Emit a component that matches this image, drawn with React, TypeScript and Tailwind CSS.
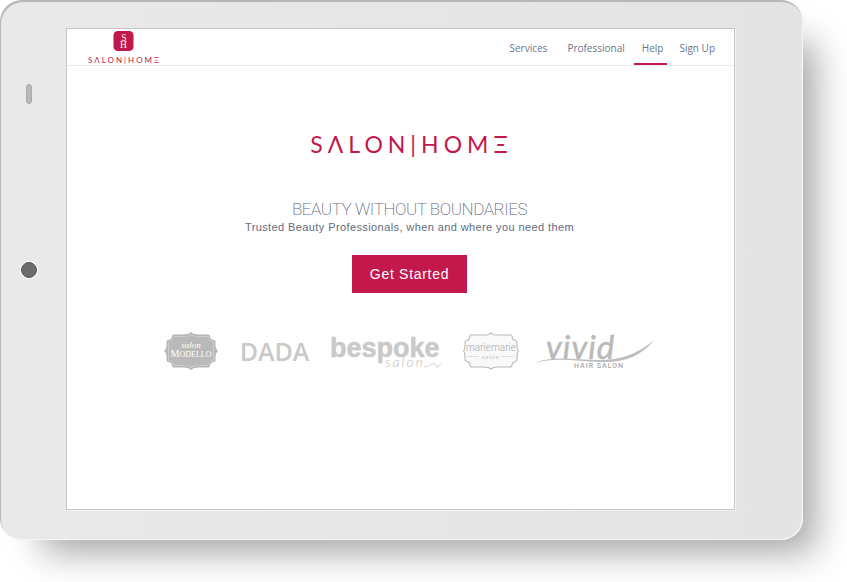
import React from "react";

const navLinks = [
  { label: "Services", className: "mr-1 px-2" },
  { label: "Professional", className: "mr-px px-2" },
  { label: "Help", className: "border-[#c2184b] pl-2 pr-1", current: true },
  { label: "Sign Up", className: "ml-1 px-2" },
];

function Monogram() {
  return (
    <svg viewBox="0 0 21 21" className="h-[21px] w-[21px]" aria-hidden="true">
      <rect width="21" height="21" rx="4.5" fill="#c2184b" />
      <g fill="#fff" fontFamily="'Liberation Serif', serif" textAnchor="middle">
        <text x="11" y="10" fontSize="10">S</text>
        <text x="10.5" y="17.500" fontSize="10">H</text>
      </g>
    </svg>
  );
}

function ModelloLogo() {
  return (
    <svg viewBox="0 0 54 38" className="h-[38px] w-[54px] shrink-0" role="img" aria-label="Salon Modello">
      <path
        d="M9 3H20Q25 3 27 .5Q29 3 34 3H45Q45.500 8 51 9V14Q51 17 53.500 19Q51 21 51 24V29Q45.500 30 45 35H34Q29 35 27 37.500Q25 35 20 35H9Q8.500 30 3 29V24Q3 21 .5 19Q3 17 3 14V9Q8.500 8 9 3Z"
        fill="#b9b9b9" stroke="#b3b3b3" strokeWidth="1"
      />
      <path
        d="M10 4.500H21Q25 4.500 27 2.500Q29 4.500 33 4.500H44Q45 9 49.500 10V28Q45 29 44 33.500H33Q29 33.500 27 35.500Q25 33.500 21 33.500H10Q9 29 4.500 28V10Q9 9 10 4.500Z"
        fill="none" stroke="#d4d4d4" strokeWidth=".7"
      />
      <g fill="#fff" fontFamily="'Liberation Serif', serif" textAnchor="middle">
        <text x="27" y="16" fontSize="9" fontStyle="italic">salon</text>
        <text x="27" y="24.500"><tspan fontSize="10">M</tspan><tspan fontSize="8">ODELLO</tspan></text>
      </g>
    </svg>
  );
}

function BespokeLogo() {
  return (
    <svg viewBox="0 0 110 42" className="h-[42px] w-[110px] shrink-0" role="img" aria-label="Bespoke salon">
      <text x="-1" y="25" fontSize="27" fontWeight="700" fill="#c9c9c9" stroke="#c9c9c9" strokeWidth=".5" fontFamily="'Liberation Sans', sans-serif">bespoke</text>
      <text x="54" y="35" fontSize="14" fontStyle="italic" fontWeight="300" fill="#bdbdbd" fontFamily="Lato, sans-serif" letterSpacing="2">salon</text>
      <path d="M93 34.500C97 36.500 101 30 104 32C106 34 104 35 106 35C108 35 108 32 110 31.500" fill="none" stroke="#c9c9c9" strokeWidth=".8" />
    </svg>
  );
}

function MarieLogo() {
  return (
    <svg viewBox="0 0 56 38" className="h-[38px] w-[56px] shrink-0" role="img" aria-label="Mariemarie salon">
      <path
        d="M8 3H21Q26 3 28 .8Q30 3 35 3H48Q49 3 49.500 6Q50 8 52.500 8.500Q54 9 54 11V14Q54 17 55.300 19Q54 21 54 24V28Q54 29 52 29.500Q49.500 30 49 33Q49 35 47 35H35Q30 35 28 37.200Q26 35 21 35H9Q7 35 7 33Q6.500 30 4 29.500Q2 29 2 28V24Q2 21 .7 19Q2 17 2 14V11Q2 9 3.500 8.500Q6.500 8 6.800 5Q7 3 8 3Z"
        fill="#f9f9f9" stroke="#bababa" strokeWidth="1.100"
      />
      <text x="28" y="19" textAnchor="middle" fontSize="10" fontWeight="300" fill="#a8a8a8" fontFamily="Roboto, sans-serif">mariemarie</text>
      <path d="M5 24.500H16M39 24.500H51" stroke="#ddd" />
      <text x="28" y="26.500" textAnchor="middle" fontSize="6" fontStyle="italic" fill="#c4c4c4" fontFamily="Lato, sans-serif" letterSpacing="1">salon</text>
    </svg>
  );
}

function VividLogo() {
  return (
    <svg viewBox="0 0 122 42" className="-ml-2 h-[42px] w-[122px] shrink-0 overflow-visible" role="img" aria-label="Vivid hair salon">
      <text x="13" y="27" fontSize="33" fontStyle="italic" fontWeight="400" fill="#b9b9b9" stroke="#b9b9b9" strokeWidth=".5" fontFamily="Lato, sans-serif" letterSpacing="1">vivid</text>
      <path d="M1 31C20 23 43 28 66 28C87 28 103 23 121 8C108 25 89 31 68 30C42 29 22 25 1 31Z" fill="#bdbdbd" />
      <text x="41" y="36" fontSize="7" fontWeight="500" fill="#a8a8a8" fontFamily="Roboto, sans-serif" letterSpacing="1">HAIR SALON</text>
    </svg>
  );
}

export default function App() {
  return (
    <div className="flex min-h-screen bg-white pr-11 pb-[42px] font-['Liberation_Sans',sans-serif]">
      <div className="flex flex-1 rounded-[22px] bg-linear-to-r from-[#e9e9e9] to-[#e4e4e4] pr-[68px] shadow-[27px_27px_36px_-15px_rgba(0,0,0,0.36),inset_1px_2px_1px_#b5b5b5,inset_-1px_-1px_1px_#f6f6f6]">
        <div className="flex w-[66px] shrink-0 flex-col items-center pr-2">
          <div className="flex-1">
            <div className="mt-[84px] h-5 w-[6px] rounded-full border border-[#aaa] bg-[#b9b9b7]" />
          </div>
          <div className="h-4 w-4 rounded-full border border-[#555] bg-[#6c6c6c] ring-1 ring-white" />
          <div className="flex-1" />
        </div>

        <div className="mt-7 mb-[30px] flex min-w-0 flex-1 flex-col border border-[#c6c6c6] bg-white shadow-[1px_1px_0_#f4f4f4]">
          <header className="flex h-[37px] items-stretch justify-between border-b border-[#ebebeb] pr-[11px] pl-[21px]">
            <a href="#home" className="flex flex-col items-center pt-[2px] text-[#c2184b]">
              <Monogram />
              <span className="mt-1 -mr-[2px] font-['Lato',sans-serif] text-[8px] leading-[10px] tracking-[2px]">SΛLON|HOMΞ</span>
            </a>
            <nav className="flex font-['Open_Sans',sans-serif] text-[10px] text-[#6a7489]">
              {navLinks.map((link) => (
                <a
                  key={link.label}
                  href="#nav"
                  aria-current={link.current ? "page" : undefined}
                  className={`flex items-center border-b-2 pt-1 ${link.current ? "" : "border-transparent"} ${link.className}`}
                >
                  {link.label}
                </a>
              ))}
            </nav>
          </header>

          <main className="flex flex-col items-center pl-[18px] text-[#5f6b80]">
            <div className="mt-16 -mr-1 font-['Lato',sans-serif] text-[23px] leading-7 tracking-[5px] text-[#c2184b]">SΛLON|HOMΞ</div>
            <h1 className="mt-[39px] font-['Roboto',sans-serif] text-[17px] leading-6 font-extralight tracking-tight">BEAUTY WITHOUT BOUNDARIES</h1>
            <p className="text-[11px] leading-3 tracking-[0.4px]">Trusted Beauty Professionals, when and where you need them</p>
            <button type="button" className="mt-[22px] h-[38px] bg-[#c2184b] px-[18px] text-sm tracking-wider text-white">Get Started</button>
            <div className="mt-[39px] flex items-start gap-[22px]">
              <ModelloLogo />
              <span className="font-['Open_Sans',sans-serif] text-[25px] leading-[38px] font-semibold text-[#c9c9c9]">DADA</span>
              <BespokeLogo />
              <MarieLogo />
              <VividLogo />
            </div>
          </main>
        </div>
      </div>
    </div>
  );
}
